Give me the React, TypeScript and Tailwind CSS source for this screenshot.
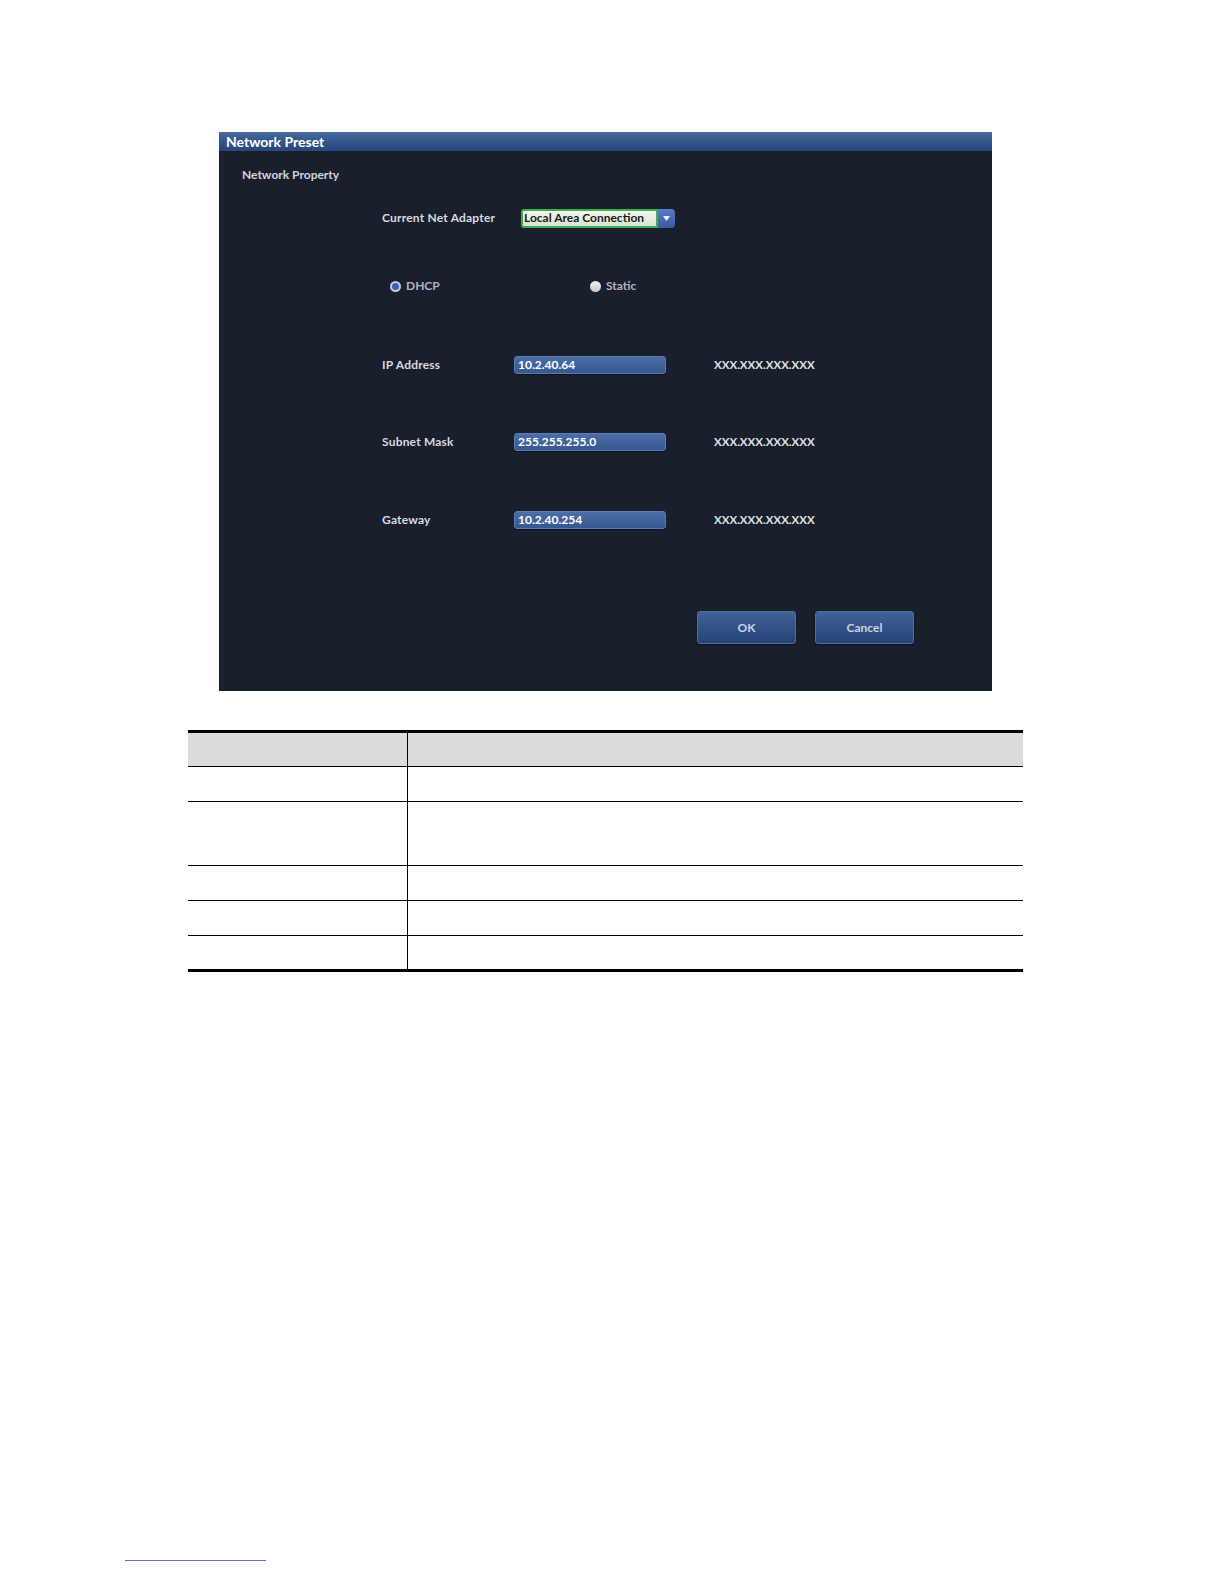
import React from "react";

const font = { fontFamily: "Lato, 'Open Sans', 'Liberation Sans', sans-serif" };

function Field({ label, value, top }: { label: string; value: string; top: string }) {
  return (
    <div className={`flex items-center ${top} h-[18px]`}>
      <div className="w-[132px] text-[12px] font-bold text-[#d6dae2] leading-none tracking-[0.2px]">{label}</div>
      <div className="w-[152px] h-[18px] rounded-[3px] bg-gradient-to-b from-[#4a6ea6] to-[#35588f] border border-[#5b7db5] flex items-center px-[3px] shadow-[0_1px_0_#0c1018]">
        <span className="text-[12px] font-bold text-white leading-none">{value}</span>
      </div>
      <div className="ml-[48px] text-[11.5px] font-bold text-[#dde1e8] leading-none">XXX.XXX.XXX.XXX</div>
    </div>
  );
}

function Row({ h, last, header }: { h: string; last?: boolean; header?: boolean }) {
  return (
    <div className={`flex ${h} ${last ? "" : "border-b border-black"} ${header ? "bg-[#dcdcdc]" : ""}`}>
      <div className="w-[220px] border-r border-black" />
      <div className="flex-1" />
    </div>
  );
}

export default function App() {
  return (
    <div className="w-full h-[1584px] overflow-hidden bg-white" style={font}>
      <div className="pt-[132px] pl-[219px]">
        <div className="w-[773px] h-[559px] bg-[#1a202b] flex flex-col">
          <div className="h-[19px] bg-gradient-to-b from-[#4a6b9c] via-[#32558a] to-[#27467a] flex items-center px-[7px]">
            <span className="text-[14px] font-bold text-white leading-none">Network Preset</span>
          </div>
          <div className="pl-[23px] mt-[18px] text-[12px] font-bold text-[#d0d5de] leading-none">Network Property</div>
          <div className="pl-[163px] flex flex-col">
            <div className="flex items-center mt-[28px] h-[18px]">
              <div className="w-[139px] text-[12px] font-bold text-[#d6dae2] leading-none tracking-[0.2px]">Current Net Adapter</div>
              <div className="flex h-[19px] w-[154px]">
                <div className="flex-1 rounded-l-[3px] border-2 border-[#3fae4e] bg-gradient-to-b from-[#f2f6ee] to-[#d9e4d2] flex items-center px-[1px]">
                  <span className="text-[12px] font-bold text-[#1a1a1a] leading-none">Local Area Connection</span>
                </div>
                <div className="w-[17px] rounded-r-[4px] bg-gradient-to-b from-[#5a7cc0] to-[#3a58a0] flex items-center justify-center">
                  <svg width="7" height="5" viewBox="0 0 7 5"><path d="M0 0 L7 0 L3.5 5 Z" fill="#e8eefc" /></svg>
                </div>
              </div>
            </div>
            <div className="flex items-center mt-[51px] h-[16px] pl-[8px]">
              <div className="w-[11px] h-[11px] rounded-full bg-[#c9ced6] flex items-center justify-center">
                <div className="w-[7px] h-[7px] rounded-full bg-[#3b62b8]" />
              </div>
              <span className="ml-[5px] text-[12px] font-bold text-[#aeb6c6] leading-none w-[184px]">DHCP</span>
              <div className="w-[11px] h-[11px] rounded-full bg-gradient-to-b from-[#f2f2f2] to-[#c8c8c8]" />
              <span className="ml-[5px] text-[12px] font-bold text-[#aeb6c6] leading-none">Static</span>
            </div>
            <Field label="IP Address" value="10.2.40.64" top="mt-[62px]" />
            <Field label="Subnet Mask" value="255.255.255.0" top="mt-[59px]" />
            <Field label="Gateway" value="10.2.40.254" top="mt-[60px]" />
          </div>
          <div className="flex pl-[478px] mt-[82px] gap-[19px]">
            <button className="w-[99px] h-[33px] rounded-[3px] bg-gradient-to-b from-[#3f6298] to-[#244475] border border-[#4e6fa4] shadow-[0_1px_2px_#0a0e16] text-[12px] font-bold text-[#cdd5e4]">OK</button>
            <button className="w-[99px] h-[33px] rounded-[3px] bg-gradient-to-b from-[#3f6298] to-[#244475] border border-[#4e6fa4] shadow-[0_1px_2px_#0a0e16] text-[12px] font-bold text-[#cdd5e4]">Cancel</button>
          </div>
        </div>
      </div>
      <div className="pl-[188px] mt-[39px]">
        <div className="w-[835px] border-t-[3px] border-b-[3px] border-black">
          <Row h="h-[34px]" header />
          <Row h="h-[35px]" />
          <Row h="h-[64px]" />
          <Row h="h-[35px]" />
          <Row h="h-[35px]" />
          <Row h="h-[33px]" last />
        </div>
      </div>
      <div className="pl-[125px] mt-[588px]">
        <div className="w-[141px] h-px bg-[#5a6fd0]" />
      </div>
    </div>
  );
}
